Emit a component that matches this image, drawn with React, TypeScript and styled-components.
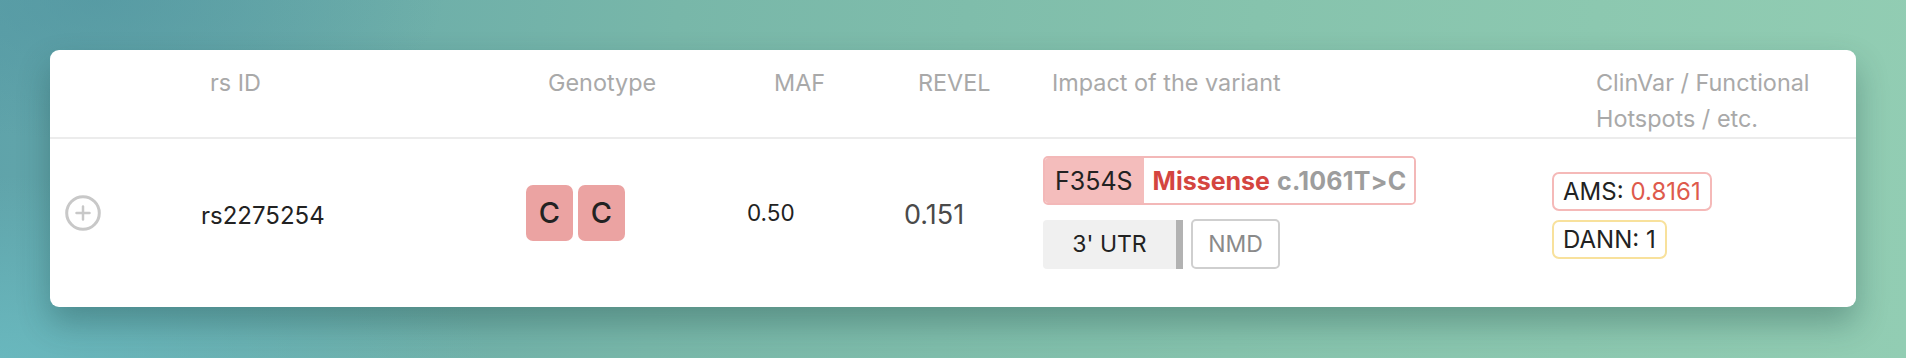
import React from "react";
import styled, { createGlobalStyle } from "styled-components";

const Global = createGlobalStyle`
  html, body { margin: 0; padding: 0; }
  body {
    width: 1906px;
    height: 358px;
    overflow: hidden;
    font-family: Inter, "Noto Sans", "Liberation Sans", sans-serif;
    background:
      radial-gradient(ellipse 700px 260px at 0% 100%, rgba(108, 190, 196, 0.75), rgba(108, 190, 196, 0) 70%),
      radial-gradient(ellipse 500px 200px at 5% 0%, rgba(80, 148, 160, 0.6), rgba(80, 148, 160, 0) 70%),
      linear-gradient(95deg, #5fa3aa 0%, #78b7a9 35%, #86c3ad 65%, #92cdb3 100%);
  }
`;

const Page = styled.div`
  padding: 50px 0 0 50px;
`;

const Card = styled.div`
  width: 1806px;
  background: #ffffff;
  border-radius: 9px;
  box-shadow: 0 16px 32px rgba(20, 60, 60, 0.32);
  overflow: hidden;
`;

const COLS = "140px 326px 221px 157px 149px 509px 1fr";

const HeaderRow = styled.div`
  display: grid;
  grid-template-columns: ${COLS};
  padding-top: 15px;
  border-bottom: 2px solid #ececec;
  align-items: start;
`;

const HeadCell = styled.div<{ $pad: number; $max?: number }>`
  padding-left: ${(p) => p.$pad}px;
  font-size: 23.4px;
  line-height: 36px;
  color: #a9a9a9;
  font-weight: 400;
  max-width: ${(p) => (p.$max ? `${p.$max}px` : "none")};
  min-height: 72px;
`;

const DataRow = styled.div`
  display: grid;
  grid-template-columns: ${COLS};
  padding: 17px 0 38px;
  align-items: center;
`;

const DataCell = styled.div<{ $pad: number; $dy?: number }>`
  padding-left: ${(p) => p.$pad}px;
  padding-top: ${(p) => p.$dy ?? 0}px;
  color: #222222;
  font-size: 24px;
`;

const ExpandButton = styled.button`
  margin-left: 15px;
  width: 36px;
  height: 36px;
  padding: 0;
  border: none;
  background: none;
  display: flex;
  cursor: pointer;
`;

const NumberText = styled.span<{ $size: number; $color: string }>`
  font-size: ${(p) => p.$size}px;
  color: ${(p) => p.$color};
`;

const AlleleGroup = styled.div`
  display: flex;
  gap: 5px;
`;

const Allele = styled.div`
  width: 47px;
  height: 56px;
  border-radius: 7px;
  background: #eba3a2;
  display: flex;
  align-items: center;
  justify-content: center;
  font-size: 29px;
  font-weight: 500;
  color: #222;
`;

const ImpactStack = styled.div`
  display: flex;
  flex-direction: column;
  align-items: flex-start;
  gap: 14px;
`;

const ProteinChange = styled.div`
  display: inline-flex;
  height: 49px;
  box-sizing: border-box;
  border: 2px solid #f3b8b8;
  border-radius: 5px;
  overflow: hidden;
  font-size: 25px;
`;

const AminoPart = styled.span`
  background: #f4bdbc;
  color: #222;
  display: flex;
  align-items: center;
  padding: 0 11px 0 10px;
`;

const EffectPart = styled.span`
  background: #fff;
  display: flex;
  align-items: center;
  gap: 7px;
  padding: 0 8px 0 9px;
  font-weight: 700;
`;

const EffectName = styled.span`
  color: #d4453f;
`;

const CodingChange = styled.span`
  color: #9d9d9d;
  letter-spacing: 0.2px;
`;

const TagLine = styled.div`
  display: flex;
  gap: 8px;
  align-items: center;
`;

const RegionTag = styled.div`
  width: 140px;
  height: 49px;
  box-sizing: border-box;
  background: #f0f0f0;
  border-right: 7px solid #b2b2b2;
  border-radius: 4px 0 0 4px;
  display: flex;
  align-items: center;
  justify-content: center;
  font-size: 23px;
  color: #222;
`;

const FlagTag = styled.div`
  width: 89px;
  height: 50px;
  box-sizing: border-box;
  border: 2px solid #cfcfcf;
  border-radius: 5px;
  display: flex;
  align-items: center;
  justify-content: center;
  font-size: 23px;
  color: #8a8a8a;
`;

const ScoreStack = styled.div`
  display: flex;
  flex-direction: column;
  align-items: flex-start;
  gap: 9px;
`;

const ScoreBox = styled.div<{ $border: string }>`
  height: 39px;
  box-sizing: border-box;
  border: 2px solid ${(p) => p.$border};
  border-radius: 7px;
  padding: 0 9px 0 9px;
  display: flex;
  align-items: center;
  font-size: 24px;
  color: #222;
`;

const ScoreValue = styled.span`
  color: #de5a4c;
  margin-left: 7px;
`;

const PlusCircle = () => (
  <svg width="36" height="36" viewBox="0 0 36 36" fill="none">
    <circle cx="18" cy="18" r="16.3" stroke="#c8c8c8" strokeWidth="3" />
    <path d="M18 11.5v13M11.5 18h13" stroke="#c8c8c8" strokeWidth="2.5" strokeLinecap="round" />
  </svg>
);

export default function App() {
  return (
    <>
      <Global />
      <Page>
        <Card>
          <HeaderRow>
            <HeadCell $pad={0} />
            <HeadCell $pad={20}>rs ID</HeadCell>
            <HeadCell $pad={32}>Genotype</HeadCell>
            <HeadCell $pad={37}>MAF</HeadCell>
            <HeadCell $pad={24}>REVEL</HeadCell>
            <HeadCell $pad={9}>Impact of the variant</HeadCell>
            <HeadCell $pad={44} $max={290}>ClinVar / Functional Hotspots / etc.</HeadCell>
          </HeaderRow>
          <DataRow>
            <DataCell $pad={0}>
              <ExpandButton aria-label="Expand">
                <PlusCircle />
              </ExpandButton>
            </DataCell>
            <DataCell $pad={11} $dy={6}>rs2275254</DataCell>
            <DataCell $pad={10}>
              <AlleleGroup>
                <Allele>C</Allele>
                <Allele>C</Allele>
              </AlleleGroup>
            </DataCell>
            <DataCell $pad={10}>
              <NumberText $size={22.5} $color="#222">0.50</NumberText>
            </DataCell>
            <DataCell $pad={10} $dy={4}>
              <NumberText $size={27} $color="#4a4a4a">0.151</NumberText>
            </DataCell>
            <DataCell $pad={0}>
              <ImpactStack>
                <ProteinChange>
                  <AminoPart>F354S</AminoPart>
                  <EffectPart>
                    <EffectName>Missense</EffectName>
                    <CodingChange>c.1061T&gt;C</CodingChange>
                  </EffectPart>
                </ProteinChange>
                <TagLine>
                  <RegionTag>3' UTR</RegionTag>
                  <FlagTag>NMD</FlagTag>
                </TagLine>
              </ImpactStack>
            </DataCell>
            <DataCell $pad={0} $dy={6}>
              <ScoreStack>
                <ScoreBox $border="#f5b9b8">
                  AMS:<ScoreValue>0.8161</ScoreValue>
                </ScoreBox>
                <ScoreBox $border="#f8e19c">DANN: 1</ScoreBox>
              </ScoreStack>
            </DataCell>
          </DataRow>
        </Card>
      </Page>
    </>
  );
}
